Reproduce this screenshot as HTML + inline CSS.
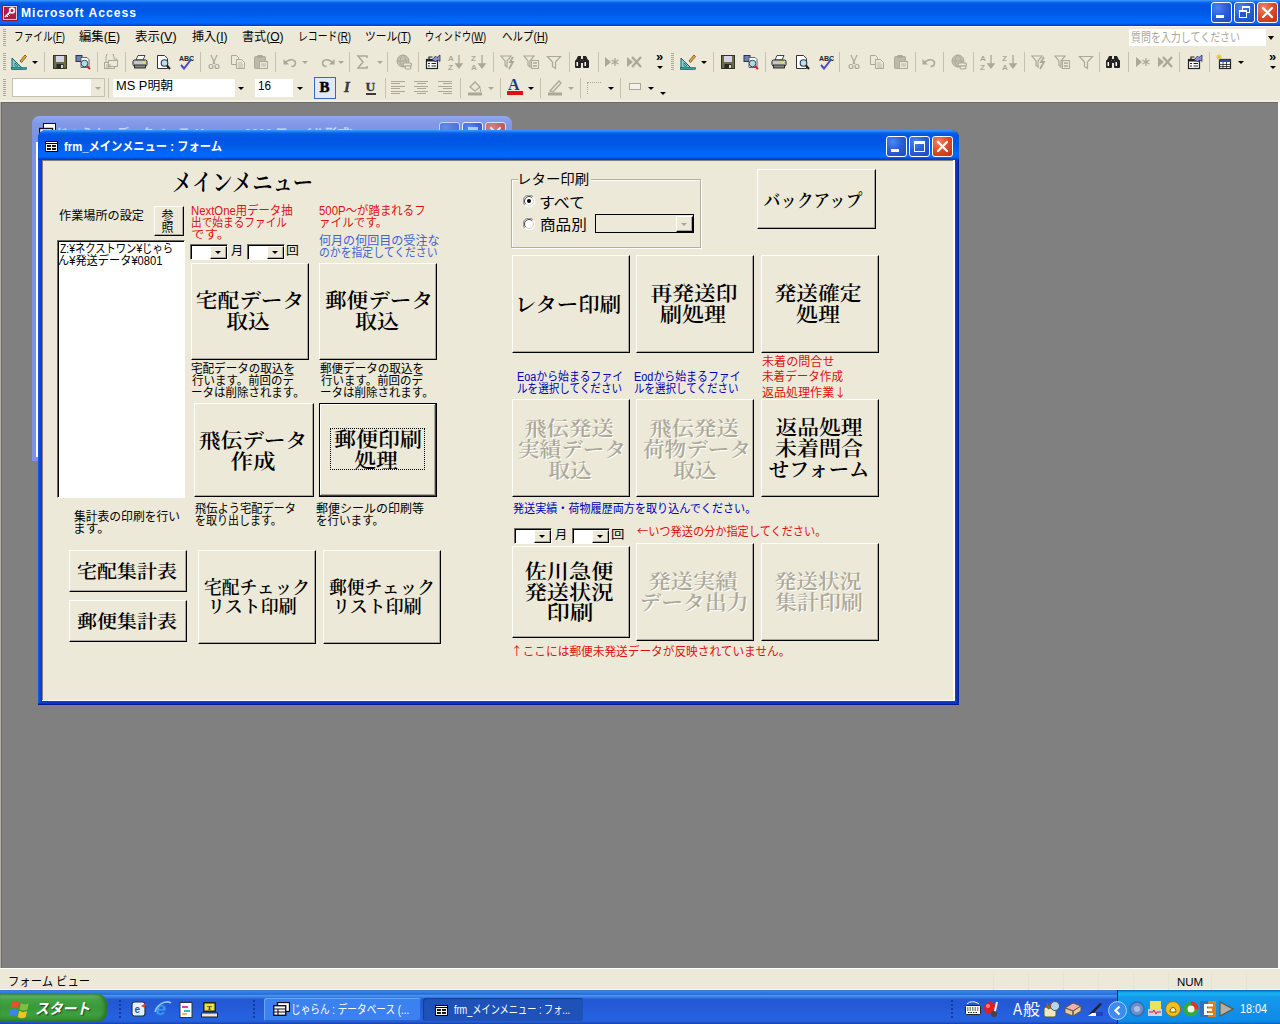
<!DOCTYPE html>
<html lang="ja">
<head>
<meta charset="utf-8">
<title>Microsoft Access</title>
<style>
*{box-sizing:border-box;margin:0;padding:0}
html,body{width:1280px;height:1024px;overflow:hidden;background:#808080}
body{position:relative;font-family:"Liberation Sans","Noto Sans CJK JP","IPAGothic",sans-serif;font-size:12px;color:#000;line-height:12px}
.abs,.abs>*{position:absolute}
#root{position:absolute;left:0;top:0;width:1280px;height:1024px;overflow:hidden}
#root div,#root span,#root svg,#root i,#root b{position:absolute}
.t{white-space:nowrap;transform-origin:0 0;line-height:12px}
.serif{font-family:"Liberation Serif","Noto Serif CJK JP","Noto Serif CJK SC",serif;font-weight:600}
/* ---------- app chrome ---------- */
#apptitle{left:0;top:0;width:1280px;height:26px;background:linear-gradient(180deg,#3a9bff 0,#2a85f8 4%,#0a62ea 10%,#0058e6 16%,#0055e4 35%,#005ce9 55%,#0066f8 75%,#0069fc 88%,#0058e8 93%,#0040c8 97%,#003cc0 100%)}
#menubar{left:0;top:26px;width:1280px;height:23px;background:#ece9d8;border-top:1px solid #fbfaf5}
#tb1{left:0;top:49px;width:1280px;height:26px;background:#ece9d8}
#tb2{left:0;top:75px;width:1280px;height:26px;background:#ece9d8}
#tbline{left:0;top:100px;width:1280px;height:2px;background:#f2f0e5}
#status{left:0;top:968px;width:1280px;height:22px;background:#ece9d8;border-top:1px solid #fff;border-bottom:1px solid #f6f8f4}
#taskbar{left:0;top:990px;width:1280px;height:34px;background:linear-gradient(180deg,#3a6cb8 0,#3c84e4 3%,#3680e2 6%,#2c78de 9%,#2268d0 12%,#4890f4 16%,#4088ee 19%,#3274dc 23%,#2458d4 28%,#245ad8 50%,#2662e0 80%,#2560dc 92%,#2050c4 96%,#1a40a8 100%)}
.m{top:5px;font-size:12px;line-height:14px;white-space:nowrap;transform-origin:0 0}
.cap{color:#fff;font-weight:bold;white-space:nowrap;transform-origin:0 0}
/* ---------- form window ---------- */
#win{left:38px;top:130px;width:921px;height:575px;border-radius:8px 8px 0 0;background:linear-gradient(90deg,#1a5aee 0,#0a44d6 2px,#0c3cc8 4px,#0c3cc8 916px,#1040c0 918px,#001c98 921px);box-shadow:inset 0 -1px 0 #001890,inset 0 -2px 0 #0a34b8}
#wintitle{left:0;top:0;width:921px;height:30px;border-radius:8px 8px 0 0;background:linear-gradient(180deg,#3a9bff 0,#2a85f8 4%,#0a62ea 10%,#0058e6 16%,#0055e4 35%,#005ce9 55%,#0066f8 75%,#0069fc 88%,#0058e8 93%,#0040c8 97%,#003cc0 100%)}
#client{left:5px;top:30px;width:911px;height:540px;background:#ece9d8}
.btn{background:#ece9d8;border-top:1px solid #fff;border-left:1px solid #fff;border-right:1px solid #000;border-bottom:1px solid #000;box-shadow:inset -1px -1px 0 #aca899}
.bt{left:0;width:100%;text-align:center;white-space:nowrap;font-size:21.33px;line-height:21px}
.dis{color:#aca899;text-shadow:1px 1px 0 #fff}
.red{color:#e00000}
.blue{color:#0000c8}
.combo{background:#fff;border-top:1px solid #6d6b62;border-left:1px solid #6d6b62;border-right:1px solid #fff;border-bottom:1px solid #fff;box-shadow:inset 1px 1px 0 #000}
.cbtn{background:#ece9d8;border-top:1px solid #fff;border-left:1px solid #fff;border-right:1px solid #000;border-bottom:1px solid #000;box-shadow:inset -1px -1px 0 #aca899}
.arrow{width:0;height:0;border-left:3px solid transparent;border-right:3px solid transparent;border-top:3px solid #000}
.serifl{font-family:"Liberation Serif",serif}
.sunk{border-top:1px solid #6d6b62;border-left:1px solid #6d6b62;border-right:1px solid #fff;border-bottom:1px solid #fff;box-shadow:inset 1px 1px 0 #000}
.focus{box-shadow:inset -1px -1px 0 #000, inset 1px 1px 0 #000, inset -2px -2px 0 #404040, inset 2px 2px 0 #fff, inset -3px -3px 0 #aca899 !important;border:none !important;background:#ece9d8}
.wb{border:1px solid #fff;border-radius:3px;background:radial-gradient(circle at 30% 25%,#4d86f0 0,#2a5fd8 45%,#1c49c0 100%)}
.wb.close{background:radial-gradient(circle at 30% 25%,#f08468 0,#dc4a26 50%,#c03010 100%)}
.wb.inact{opacity:.55}
.backwin{background:#7b94e4;border-radius:7px 7px 0 0}
.bwtitle{border-radius:8px 8px 0 0;background:linear-gradient(180deg,#92a8f0 0,#8098e6 30%,#7a90e0 100%)}
.startbtn{border-radius:0 10px 10px 0 / 0 14px 14px 0;background:linear-gradient(180deg,#4fa44f 0,#66b866 7%,#46a446 18%,#3a993a 45%,#3e9f3e 75%,#359235 90%,#2b7d2b 100%);box-shadow:inset -3px 0 4px #2a6e2a}
.task{border-radius:3px;background:#3c81f0;box-shadow:inset 1px 1px 0 #6aa4ff, inset -1px -1px 0 #2a5fd0}
.task.active{background:#1e52b8;box-shadow:inset 1px 1px 1px #143c90}
.tray{background:linear-gradient(180deg,#0c59b9 0,#139ee9 6%,#18b5f2 12%,#139beb 20%,#1290e8 60%,#0d8dea 85%,#0d88e0 93%,#095bc9 100%);border-left:1px solid #092e51}
.t .cj{position:static !important;font-family:"Noto Sans CJK JP","IPAGothic",sans-serif}
</style>
</head>
<body>
<div id="root">
<div id="apptitle"></div>
<svg style="left:2px;top:5px" width="16" height="16" viewBox="0 0 16 16"><rect x="0" y="0" width="16" height="16" fill="#8b1538"/><rect x="1.5" y="1.5" width="13" height="13" fill="#a82048" stroke="#e8c8d0" stroke-width="1"/><path d="M3 12L8 7" stroke="#fff" stroke-width="1.6"/><circle cx="10" cy="5.5" r="2.4" fill="none" stroke="#fff" stroke-width="1.6"/><path d="M4.5 10.5l1.5 1.5M6 9l1.5 1.5" stroke="#fff" stroke-width="1"/></svg>
<span id="t1" class="t cap" style="left:20.98px;top:6px;font-size:12px;line-height:15px;transform:scaleX(1.0097);letter-spacing:1px;">Microsoft Access</span>
<div class="wb" style="left:1211px;top:2px;width:21px;height:21px"><i style="left:4px;top:12px;width:8px;height:3px;background:#fff"></i></div>
<div class="wb" style="left:1234px;top:2px;width:21px;height:21px"><i style="left:7px;top:3px;width:8px;height:7px;border:1px solid #fff;border-top-width:2px"></i><i style="left:4px;top:7px;width:8px;height:8px;border:1px solid #fff;border-top-width:2px;background:#2458c8"></i></div>
<div class="wb close" style="left:1257px;top:2px;width:21px;height:21px"><svg style="left:0;top:0" width="19" height="19" viewBox="0 0 19 19"><path d="M5 5L14 14M14 5L5 14" stroke="#fff" stroke-width="2.2" stroke-linecap="round"/></svg></div>
<div id="menubar"></div><div id="tb1"></div><div id="tb2"></div><div id="tbline"></div>
<div class="" style="left:3px;top:29px;width:3px;height:17px;background:repeating-linear-gradient(180deg,#a5a28f 0,#a5a28f 1px,transparent 1px,transparent 2px);opacity:.9"></div>
<div class="" style="left:3px;top:53px;width:3px;height:18px;background:repeating-linear-gradient(180deg,#a5a28f 0,#a5a28f 1px,transparent 1px,transparent 2px);opacity:.9"></div>
<div class="" style="left:3px;top:79px;width:3px;height:18px;background:repeating-linear-gradient(180deg,#a5a28f 0,#a5a28f 1px,transparent 1px,transparent 2px);opacity:.9"></div>
<div class="" style="left:671px;top:53px;width:3px;height:18px;background:repeating-linear-gradient(180deg,#a5a28f 0,#a5a28f 1px,transparent 1px,transparent 2px);opacity:.9"></div>
<span id="t2" class="t " style="left:13.96px;top:30px;font-size:12px;line-height:14px;transform:scaleX(0.8062);">ファイル(<u>F</u>)</span>
<span id="t3" class="t " style="left:79.42px;top:30px;font-size:12px;line-height:14px;transform:scaleX(1.0273);">編集(<u>E</u>)</span>
<span id="t4" class="t " style="left:135.19px;top:30px;font-size:12px;line-height:14px;transform:scaleX(1.0393);">表示(<u>V</u>)</span>
<span id="t5" class="t " style="left:192px;top:30px;font-size:12px;line-height:14px;transform:scaleX(1.0051);">挿入(<u>I</u>)</span>
<span id="t6" class="t " style="left:241.95px;top:30px;font-size:12px;line-height:14px;transform:scaleX(1.0058);">書式(<u>O</u>)</span>
<span id="t7" class="t " style="left:297.88px;top:30px;font-size:12px;line-height:14px;transform:scaleX(0.8217);">レコード(<u>R</u>)</span>
<span id="t8" class="t " style="left:365.43px;top:30px;font-size:12px;line-height:14px;transform:scaleX(0.8978);">ツール(<u>T</u>)</span>
<span id="t9" class="t " style="left:424.98px;top:30px;font-size:12px;line-height:14px;transform:scaleX(0.7692);">ウィンドウ(<u>W</u>)</span>
<span id="t10" class="t " style="left:501.96px;top:30px;font-size:12px;line-height:14px;transform:scaleX(0.8747);">ヘルプ(<u>H</u>)</span>
<div class="" style="left:1129px;top:29px;width:137px;height:17px;background:#fff"></div>
<span id="t11" class="t " style="left:1130.98px;top:31px;font-size:12px;line-height:14px;color:#aca899;transform:scaleX(0.8305);">質問を入力してください</span>
<i class="arrow" style="left:1268px;top:36px;border-left-width:3.5px;border-right-width:3.5px;border-top-width:4px"></i>
<svg style="left:11px;top:54px" width="16" height="16" viewBox="0 0 16 16"><path d="M1 15V4L12 15Z" fill="#7fd0d0" stroke="#106060" stroke-width="1"/><path d="M4 12V9L7 12Z" fill="#ece9d8" stroke="#106060" stroke-width=".8"/><path d="M9 7L14 1L15.5 2.5L10.5 8.5Z" fill="#e8b040" stroke="#704010" stroke-width=".8"/><rect x="0.5" y="13.5" width="15" height="2" fill="#40a0a0" stroke="#106060" stroke-width=".6"/></svg>
<i class="arrow" style="left:32px;top:61px;border-top-color:#000"></i>
<div class="" style="left:44px;top:52px;width:1px;height:20px;background:#c5c2b2"></div>
<svg style="left:52px;top:54px" width="16" height="16" viewBox="0 0 16 16"><rect x="1.5" y="1.5" width="13" height="13" fill="#6b6b4a" stroke="#33331f"/><rect x="4" y="2" width="8" height="6" fill="#d8d4e8"/><rect x="4.5" y="10" width="7" height="4.5" fill="#2a2a20"/><rect x="9" y="11" width="2" height="3" fill="#d8d4e8"/></svg>
<svg style="left:75px;top:54px" width="16" height="16" viewBox="0 0 16 16"><rect x="1" y="1.5" width="6" height="6" fill="#6a7fc0" stroke="#333"/><path d="M6 3.5h6l2 2v8H6z" fill="#fff" stroke="#555" stroke-width=".9"/><circle cx="9.5" cy="9.5" r="3.3" fill="#a8e0e8" stroke="#446" stroke-width="1"/><path d="M12 12l3 3" stroke="#d02030" stroke-width="2"/></svg>
<div class="" style="left:97px;top:52px;width:1px;height:20px;background:#c5c2b2"></div>
<svg style="left:103px;top:54px" width="16" height="16" viewBox="0 0 16 16"><path d="M3 8V3a4 4 0 0 1 8 0V5l3 0v3" fill="none" stroke="#aca899"/><rect x="1.5" y="8.5" width="10" height="6" fill="#ece9d8" stroke="#aca899"/><rect x="5.5" y="6.5" width="9" height="6" fill="#ece9d8" stroke="#aca899"/><path d="M3 11h5M3 13h5" stroke="#aca899"/></svg>
<div class="" style="left:125px;top:52px;width:1px;height:20px;background:#c5c2b2"></div>
<svg style="left:132px;top:54px" width="16" height="16" viewBox="0 0 16 16"><path d="M4 6L6 1.5h7L11 6z" fill="#fff" stroke="#333" stroke-width=".9"/><rect x="1" y="6" width="14" height="6" rx="1.5" fill="#c8c8c0" stroke="#222"/><rect x="2.5" y="11" width="11" height="3" fill="#888" stroke="#222" stroke-width=".9"/><rect x="11" y="8" width="2" height="1" fill="#ee3"/></svg>
<svg style="left:155px;top:54px" width="16" height="16" viewBox="0 0 16 16"><path d="M2.500 1.500h7l3 3v10h-10z" fill="#fff" stroke="#333"/><circle cx="9.500" cy="9" r="3.300" fill="#b8e4ec" stroke="#335" stroke-width="1.100"/><path d="M12 11.500l3 3.500" stroke="#222" stroke-width="2"/></svg>
<svg style="left:178px;top:54px" width="16" height="16" viewBox="0 0 16 16"><text x="1" y="7" font-size="7" font-weight="bold" font-family="Liberation Sans,sans-serif" fill="#223">ABC</text><path d="M3 11l3 3.500L13.500 5" fill="none" stroke="#4a4ac0" stroke-width="2"/></svg>
<div class="" style="left:200px;top:52px;width:1px;height:20px;background:#c5c2b2"></div>
<svg style="left:206px;top:54px" width="16" height="16" viewBox="0 0 16 16"><path d="M5 1l4 9M11 1L7 10" stroke="#aca899" stroke-width="1.200" fill="none"/><circle cx="5" cy="12.500" r="2" fill="none" stroke="#aca899" stroke-width="1.200"/><circle cx="11" cy="12.500" r="2" fill="none" stroke="#aca899" stroke-width="1.200"/></svg>
<svg style="left:230px;top:54px" width="16" height="16" viewBox="0 0 16 16"><path d="M1.500 1.500h5l2 2v7h-7z" fill="#ece9d8" stroke="#aca899"/><path d="M6.500 5.500h5l3 3v6h-8z" fill="#ece9d8" stroke="#aca899"/><path d="M8 9h4M8 11h5M8 13h5" stroke="#aca899" stroke-width=".8"/></svg>
<svg style="left:253px;top:54px" width="16" height="16" viewBox="0 0 16 16"><rect x="1.500" y="2.500" width="11" height="12" rx="1" fill="#bdb9a6" stroke="#aca899"/><rect x="4.500" y="1" width="5" height="3" fill="#aca899"/><rect x="6.500" y="7.500" width="8" height="7" fill="#ece9d8" stroke="#aca899"/><path d="M8 10h5M8 12h5" stroke="#aca899" stroke-width=".8"/></svg>
<div class="" style="left:275px;top:52px;width:1px;height:20px;background:#c5c2b2"></div>
<svg style="left:282px;top:54px" width="16" height="16" viewBox="0 0 16 16"><path d="M1.500 5v5.500H7z" fill="#aca899"/><path d="M3 9.500C5 5.500 11 4.500 13 7.500c1.500 2.500-.5 5-3.500 5" fill="none" stroke="#aca899" stroke-width="1.700"/></svg>
<i class="arrow" style="left:302px;top:61px;border-top-color:#aca899"></i>
<svg style="left:320px;top:54px" width="16" height="16" viewBox="0 0 16 16"><path d="M14.500 5v5.500H9z" fill="#aca899"/><path d="M13 9.500C11 5.500 5 4.500 3 7.500c-1.500 2.500.5 5 3.500 5" fill="none" stroke="#aca899" stroke-width="1.700"/></svg>
<i class="arrow" style="left:338px;top:61px;border-top-color:#aca899"></i>
<div class="" style="left:349px;top:52px;width:1px;height:20px;background:#c5c2b2"></div>
<svg style="left:355px;top:54px" width="16" height="16" viewBox="0 0 16 16"><path d="M12 4V2H3l5 6-5 6h9v-2" fill="none" stroke="#aca899" stroke-width="1.500"/></svg>
<i class="arrow" style="left:377px;top:61px;border-top-color:#aca899"></i>
<div class="" style="left:387px;top:52px;width:1px;height:20px;background:#c5c2b2"></div>
<svg style="left:396px;top:54px" width="16" height="16" viewBox="0 0 16 16"><circle cx="7" cy="7" r="6" fill="#c4c0ae" stroke="#aca899"/><path d="M1 7h12M7 1c-4 3-4 9 0 12M7 1c4 3 4 9 0 12" fill="none" stroke="#aca899" stroke-width=".9"/><rect x="7" y="9" width="8.500" height="3" rx="1.500" fill="#ece9d8" stroke="#aca899" stroke-width="1.200"/><rect x="9" y="12" width="6" height="3" rx="1.500" fill="#ece9d8" stroke="#aca899" stroke-width="1.200"/></svg>
<div class="" style="left:418px;top:52px;width:1px;height:20px;background:#c5c2b2"></div>
<svg style="left:425px;top:54px" width="16" height="16" viewBox="0 0 16 16"><rect x="1.500" y="5.500" width="11" height="9" fill="#fff" stroke="#222" stroke-width="1.200"/><rect x="1.500" y="5.500" width="11" height="2" fill="#222"/><path d="M3 9.500h2M6.500 9.500h4.500M3 12h2M6.500 12h4.500" stroke="#222" stroke-width="1.200"/><path d="M7 6l3.500-4 1.500 1.500L15 1v6.500l-2-1.500-2.500 1.500z" fill="#8890d8" stroke="#223" stroke-width=".7"/><path d="M4 5.500V3h3.500" fill="none" stroke="#222" stroke-width="1.200"/></svg>
<svg style="left:448px;top:54px" width="16" height="16" viewBox="0 0 16 16"><text x="0" y="7" font-size="8" font-weight="bold" font-family="Liberation Sans,sans-serif" fill="#aca899">A</text><text x="0" y="15.500" font-size="8" font-weight="bold" font-family="Liberation Sans,sans-serif" fill="#aca899">Z</text><path d="M11 1v12M8 10l3 4 3-4z" stroke="#aca899" stroke-width="1.300" fill="#aca899"/></svg>
<svg style="left:471px;top:54px" width="16" height="16" viewBox="0 0 16 16"><text x="0" y="7" font-size="8" font-weight="bold" font-family="Liberation Sans,sans-serif" fill="#aca899">Z</text><text x="0" y="15.500" font-size="8" font-weight="bold" font-family="Liberation Sans,sans-serif" fill="#aca899">A</text><path d="M11 1v12M8 10l3 4 3-4z" stroke="#aca899" stroke-width="1.300" fill="#aca899"/></svg>
<div class="" style="left:493px;top:52px;width:1px;height:20px;background:#c5c2b2"></div>
<svg style="left:500px;top:54px" width="16" height="16" viewBox="0 0 16 16"><path d="M1 2h10L7 7v6l-2-1.500V7z" fill="#ece9d8" stroke="#aca899" stroke-width="1.200"/><path d="M13 3l-3 5h3l-4 7" fill="none" stroke="#aca899" stroke-width="1.800"/></svg>
<svg style="left:523px;top:54px" width="16" height="16" viewBox="0 0 16 16"><path d="M1 2h10L7 7v6l-2-1.500V7z" fill="#ece9d8" stroke="#aca899" stroke-width="1.200"/><rect x="8.500" y="6.500" width="7" height="8" fill="#ece9d8" stroke="#aca899"/><path d="M10 9h4M10 12h4" stroke="#aca899" stroke-width="1.500"/></svg>
<svg style="left:546px;top:54px" width="16" height="16" viewBox="0 0 16 16"><path d="M1.500 2.500h13L9.500 8v6.500l-3-2V8z" fill="#ece9d8" stroke="#aca899" stroke-width="1.200"/></svg>
<div class="" style="left:569px;top:52px;width:1px;height:20px;background:#c5c2b2"></div>
<svg style="left:574px;top:54px" width="16" height="16" viewBox="0 0 16 16"><path d="M2 6l2-4h3v4zM14 6l-2-4H9v4z" fill="#222"/><rect x="1" y="6" width="6" height="8" rx="1" fill="#222"/><rect x="9" y="6" width="6" height="8" rx="1" fill="#222"/><rect x="7" y="5" width="2" height="4" fill="#222"/><rect x="2.500" y="8" width="1.500" height="4" fill="#fff"/><rect x="10.500" y="8" width="1.500" height="4" fill="#fff"/></svg>
<div class="" style="left:598px;top:52px;width:1px;height:20px;background:#c5c2b2"></div>
<svg style="left:604px;top:54px" width="16" height="16" viewBox="0 0 16 16"><path d="M1 3v10l6-5z" fill="#aca899"/><path d="M11 4v8M7.500 6l7 4M7.500 10l7-4" stroke="#aca899" stroke-width="1.300"/></svg>
<svg style="left:626px;top:54px" width="16" height="16" viewBox="0 0 16 16"><path d="M1 3v10l6-5z" fill="#aca899"/><path d="M6 3l9 10M15 3L6 13" stroke="#aca899" stroke-width="2.200"/></svg>
<span id="t12" class="t " style="left:656px;top:50px;font-size:13px;line-height:13px;font-weight:bold;line-height:13px">»</span>
<i class="arrow" style="left:657px;top:66px;border-top-color:#000"></i>
<svg style="left:680px;top:54px" width="16" height="16" viewBox="0 0 16 16"><path d="M1 15V4L12 15Z" fill="#7fd0d0" stroke="#106060" stroke-width="1"/><path d="M4 12V9L7 12Z" fill="#ece9d8" stroke="#106060" stroke-width=".8"/><path d="M9 7L14 1L15.5 2.5L10.5 8.5Z" fill="#e8b040" stroke="#704010" stroke-width=".8"/><rect x="0.5" y="13.5" width="15" height="2" fill="#40a0a0" stroke="#106060" stroke-width=".6"/></svg>
<i class="arrow" style="left:701px;top:61px;border-top-color:#000"></i>
<div class="" style="left:713px;top:52px;width:1px;height:20px;background:#c5c2b2"></div>
<svg style="left:720px;top:54px" width="16" height="16" viewBox="0 0 16 16"><rect x="1.5" y="1.5" width="13" height="13" fill="#6b6b4a" stroke="#33331f"/><rect x="4" y="2" width="8" height="6" fill="#d8d4e8"/><rect x="4.5" y="10" width="7" height="4.5" fill="#2a2a20"/><rect x="9" y="11" width="2" height="3" fill="#d8d4e8"/></svg>
<svg style="left:743px;top:54px" width="16" height="16" viewBox="0 0 16 16"><rect x="1" y="1.5" width="6" height="6" fill="#6a7fc0" stroke="#333"/><path d="M6 3.5h6l2 2v8H6z" fill="#fff" stroke="#555" stroke-width=".9"/><circle cx="9.5" cy="9.5" r="3.3" fill="#a8e0e8" stroke="#446" stroke-width="1"/><path d="M12 12l3 3" stroke="#d02030" stroke-width="2"/></svg>
<div class="" style="left:765px;top:52px;width:1px;height:20px;background:#c5c2b2"></div>
<svg style="left:771px;top:54px" width="16" height="16" viewBox="0 0 16 16"><path d="M4 6L6 1.5h7L11 6z" fill="#fff" stroke="#333" stroke-width=".9"/><rect x="1" y="6" width="14" height="6" rx="1.5" fill="#c8c8c0" stroke="#222"/><rect x="2.5" y="11" width="11" height="3" fill="#888" stroke="#222" stroke-width=".9"/><rect x="11" y="8" width="2" height="1" fill="#ee3"/></svg>
<svg style="left:794px;top:54px" width="16" height="16" viewBox="0 0 16 16"><path d="M2.500 1.500h7l3 3v10h-10z" fill="#fff" stroke="#333"/><circle cx="9.500" cy="9" r="3.300" fill="#b8e4ec" stroke="#335" stroke-width="1.100"/><path d="M12 11.500l3 3.500" stroke="#222" stroke-width="2"/></svg>
<svg style="left:818px;top:54px" width="16" height="16" viewBox="0 0 16 16"><text x="1" y="7" font-size="7" font-weight="bold" font-family="Liberation Sans,sans-serif" fill="#223">ABC</text><path d="M3 11l3 3.500L13.500 5" fill="none" stroke="#4a4ac0" stroke-width="2"/></svg>
<div class="" style="left:839px;top:52px;width:1px;height:20px;background:#c5c2b2"></div>
<svg style="left:846px;top:54px" width="16" height="16" viewBox="0 0 16 16"><path d="M5 1l4 9M11 1L7 10" stroke="#aca899" stroke-width="1.200" fill="none"/><circle cx="5" cy="12.500" r="2" fill="none" stroke="#aca899" stroke-width="1.200"/><circle cx="11" cy="12.500" r="2" fill="none" stroke="#aca899" stroke-width="1.200"/></svg>
<svg style="left:869px;top:54px" width="16" height="16" viewBox="0 0 16 16"><path d="M1.500 1.500h5l2 2v7h-7z" fill="#ece9d8" stroke="#aca899"/><path d="M6.500 5.500h5l3 3v6h-8z" fill="#ece9d8" stroke="#aca899"/><path d="M8 9h4M8 11h5M8 13h5" stroke="#aca899" stroke-width=".8"/></svg>
<svg style="left:893px;top:54px" width="16" height="16" viewBox="0 0 16 16"><rect x="1.500" y="2.500" width="11" height="12" rx="1" fill="#bdb9a6" stroke="#aca899"/><rect x="4.500" y="1" width="5" height="3" fill="#aca899"/><rect x="6.500" y="7.500" width="8" height="7" fill="#ece9d8" stroke="#aca899"/><path d="M8 10h5M8 12h5" stroke="#aca899" stroke-width=".8"/></svg>
<div class="" style="left:915px;top:52px;width:1px;height:20px;background:#c5c2b2"></div>
<svg style="left:921px;top:54px" width="16" height="16" viewBox="0 0 16 16"><path d="M1.500 5v5.500H7z" fill="#aca899"/><path d="M3 9.500C5 5.500 11 4.500 13 7.500c1.500 2.500-.5 5-3.500 5" fill="none" stroke="#aca899" stroke-width="1.700"/></svg>
<div class="" style="left:943px;top:52px;width:1px;height:20px;background:#c5c2b2"></div>
<svg style="left:951px;top:54px" width="16" height="16" viewBox="0 0 16 16"><circle cx="7" cy="7" r="6" fill="#c4c0ae" stroke="#aca899"/><path d="M1 7h12M7 1c-4 3-4 9 0 12M7 1c4 3 4 9 0 12" fill="none" stroke="#aca899" stroke-width=".9"/><rect x="7" y="9" width="8.500" height="3" rx="1.500" fill="#ece9d8" stroke="#aca899" stroke-width="1.200"/><rect x="9" y="12" width="6" height="3" rx="1.500" fill="#ece9d8" stroke="#aca899" stroke-width="1.200"/></svg>
<div class="" style="left:973px;top:52px;width:1px;height:20px;background:#c5c2b2"></div>
<svg style="left:980px;top:54px" width="16" height="16" viewBox="0 0 16 16"><text x="0" y="7" font-size="8" font-weight="bold" font-family="Liberation Sans,sans-serif" fill="#aca899">A</text><text x="0" y="15.500" font-size="8" font-weight="bold" font-family="Liberation Sans,sans-serif" fill="#aca899">Z</text><path d="M11 1v12M8 10l3 4 3-4z" stroke="#aca899" stroke-width="1.300" fill="#aca899"/></svg>
<svg style="left:1002px;top:54px" width="16" height="16" viewBox="0 0 16 16"><text x="0" y="7" font-size="8" font-weight="bold" font-family="Liberation Sans,sans-serif" fill="#aca899">Z</text><text x="0" y="15.500" font-size="8" font-weight="bold" font-family="Liberation Sans,sans-serif" fill="#aca899">A</text><path d="M11 1v12M8 10l3 4 3-4z" stroke="#aca899" stroke-width="1.300" fill="#aca899"/></svg>
<div class="" style="left:1024px;top:52px;width:1px;height:20px;background:#c5c2b2"></div>
<svg style="left:1031px;top:54px" width="16" height="16" viewBox="0 0 16 16"><path d="M1 2h10L7 7v6l-2-1.500V7z" fill="#ece9d8" stroke="#aca899" stroke-width="1.200"/><path d="M13 3l-3 5h3l-4 7" fill="none" stroke="#aca899" stroke-width="1.800"/></svg>
<svg style="left:1054px;top:54px" width="16" height="16" viewBox="0 0 16 16"><path d="M1 2h10L7 7v6l-2-1.500V7z" fill="#ece9d8" stroke="#aca899" stroke-width="1.200"/><rect x="8.500" y="6.500" width="7" height="8" fill="#ece9d8" stroke="#aca899"/><path d="M10 9h4M10 12h4" stroke="#aca899" stroke-width="1.500"/></svg>
<svg style="left:1078px;top:54px" width="16" height="16" viewBox="0 0 16 16"><path d="M1.500 2.500h13L9.500 8v6.500l-3-2V8z" fill="#ece9d8" stroke="#aca899" stroke-width="1.200"/></svg>
<div class="" style="left:1099px;top:52px;width:1px;height:20px;background:#c5c2b2"></div>
<svg style="left:1105px;top:54px" width="16" height="16" viewBox="0 0 16 16"><path d="M2 6l2-4h3v4zM14 6l-2-4H9v4z" fill="#222"/><rect x="1" y="6" width="6" height="8" rx="1" fill="#222"/><rect x="9" y="6" width="6" height="8" rx="1" fill="#222"/><rect x="7" y="5" width="2" height="4" fill="#222"/><rect x="2.500" y="8" width="1.500" height="4" fill="#fff"/><rect x="10.500" y="8" width="1.500" height="4" fill="#fff"/></svg>
<div class="" style="left:1128px;top:52px;width:1px;height:20px;background:#c5c2b2"></div>
<svg style="left:1135px;top:54px" width="16" height="16" viewBox="0 0 16 16"><path d="M1 3v10l6-5z" fill="#aca899"/><path d="M11 4v8M7.500 6l7 4M7.500 10l7-4" stroke="#aca899" stroke-width="1.300"/></svg>
<svg style="left:1157px;top:54px" width="16" height="16" viewBox="0 0 16 16"><path d="M1 3v10l6-5z" fill="#aca899"/><path d="M6 3l9 10M15 3L6 13" stroke="#aca899" stroke-width="2.200"/></svg>
<div class="" style="left:1179px;top:52px;width:1px;height:20px;background:#c5c2b2"></div>
<svg style="left:1187px;top:54px" width="16" height="16" viewBox="0 0 16 16"><rect x="1.500" y="5.500" width="11" height="9" fill="#fff" stroke="#222" stroke-width="1.200"/><rect x="1.500" y="5.500" width="11" height="2" fill="#222"/><path d="M3 9.500h2M6.500 9.500h4.500M3 12h2M6.500 12h4.500" stroke="#222" stroke-width="1.200"/><path d="M7 6l3.500-4 1.500 1.500L15 1v6.500l-2-1.500-2.500 1.500z" fill="#8890d8" stroke="#223" stroke-width=".7"/><path d="M4 5.500V3h3.500" fill="none" stroke="#222" stroke-width="1.200"/></svg>
<div class="" style="left:1209px;top:52px;width:1px;height:20px;background:#c5c2b2"></div>
<svg style="left:1216px;top:54px" width="16" height="16" viewBox="0 0 16 16"><rect x="3.500" y="5.500" width="11" height="9" fill="#fff" stroke="#222" stroke-width="1.200"/><rect x="3.500" y="5.500" width="11" height="2.500" fill="#334a9a"/><path d="M3.500 10.500h11M3.500 12.500h11M7 8v6.500M10.500 8v6.500" stroke="#222" stroke-width=".8"/><path d="M3 0v6M0 3h6M1 1l4 4M5 1L1 5" stroke="#e0c020" stroke-width=".9"/></svg>
<i class="arrow" style="left:1238px;top:61px;border-top-color:#000"></i>
<span id="t13" class="t " style="left:1269px;top:50px;font-size:13px;line-height:13px;font-weight:bold;line-height:13px">»</span>
<i class="arrow" style="left:1270px;top:66px;border-top-color:#000"></i>
<div class="" style="left:12px;top:78px;width:93px;height:19px;background:#fff;border:1px solid #c5c2b2"></div>
<div class="" style="left:91px;top:79px;width:13px;height:17px;background:#ece9d8"></div>
<i class="arrow" style="left:95px;top:87px;border-top-color:#aca899"></i>
<div class="" style="left:108px;top:78px;width:1px;height:20px;background:#c5c2b2"></div>
<div class="" style="left:113px;top:79px;width:136px;height:18px;background:#fff"></div>
<div class="" style="left:235px;top:79px;width:14px;height:18px;background:#ece9d8"></div>
<i class="arrow" style="left:238px;top:87px;border-top-color:#000"></i>
<span id="t14" class="t " style="left:115.96px;top:79px;font-size:12px;line-height:14px;transform:scaleX(1.0699);">MS P明朝</span>
<div class="" style="left:255px;top:79px;width:52px;height:18px;background:#fff"></div>
<div class="" style="left:293px;top:79px;width:14px;height:18px;background:#ece9d8"></div>
<i class="arrow" style="left:297px;top:87px;border-top-color:#000"></i>
<span id="t15" class="t " style="left:257.91px;top:79px;font-size:12px;line-height:14px;transform:scaleX(0.9799);">16</span>
<div class="" style="left:314px;top:77px;width:22px;height:22px;background:#e3e8f4;border:1px solid #316ac5"></div>
<span id="t16" class="t serifl" style="left:319.5px;top:78px;font-size:15px;line-height:15px;font-weight:bold;line-height:18px;-webkit-text-stroke:.5px #000">B</span>
<span id="t17" class="t serifl" style="left:344px;top:78px;font-size:15px;line-height:15px;font-weight:bold;font-style:italic;line-height:18px;color:#3a3a36;-webkit-text-stroke:.4px #3a3a36">I</span>
<span id="t18" class="t serifl" style="left:365.5px;top:79px;font-size:13.5px;line-height:13.5px;font-weight:bold;line-height:16px;color:#3a3a36;-webkit-text-stroke:.3px #3a3a36">U</span>
<div class="" style="left:366px;top:93px;width:10px;height:1.5px;background:#3a3a36"></div>
<div class="" style="left:385px;top:78px;width:1px;height:20px;background:#c5c2b2"></div>
<div class="" style="left:391px;top:81px;width:14px;height:1px;background:#aca899"></div>
<div class="" style="left:391px;top:83.4px;width:9px;height:1px;background:#aca899"></div>
<div class="" style="left:391px;top:85.8px;width:14px;height:1px;background:#aca899"></div>
<div class="" style="left:391px;top:88.2px;width:9px;height:1px;background:#aca899"></div>
<div class="" style="left:391px;top:90.6px;width:14px;height:1px;background:#aca899"></div>
<div class="" style="left:391px;top:93px;width:9px;height:1px;background:#aca899"></div>
<div class="" style="left:414px;top:81px;width:14px;height:1px;background:#aca899"></div>
<div class="" style="left:416.5px;top:83.4px;width:9px;height:1px;background:#aca899"></div>
<div class="" style="left:414px;top:85.8px;width:14px;height:1px;background:#aca899"></div>
<div class="" style="left:416.5px;top:88.2px;width:9px;height:1px;background:#aca899"></div>
<div class="" style="left:414px;top:90.6px;width:14px;height:1px;background:#aca899"></div>
<div class="" style="left:416.5px;top:93px;width:9px;height:1px;background:#aca899"></div>
<div class="" style="left:438px;top:81px;width:14px;height:1px;background:#aca899"></div>
<div class="" style="left:443px;top:83.4px;width:9px;height:1px;background:#aca899"></div>
<div class="" style="left:438px;top:85.8px;width:14px;height:1px;background:#aca899"></div>
<div class="" style="left:443px;top:88.2px;width:9px;height:1px;background:#aca899"></div>
<div class="" style="left:438px;top:90.6px;width:14px;height:1px;background:#aca899"></div>
<div class="" style="left:443px;top:93px;width:9px;height:1px;background:#aca899"></div>
<div class="" style="left:460px;top:78px;width:1px;height:20px;background:#c5c2b2"></div>
<svg style="left:467px;top:80px" width="16" height="16" viewBox="0 0 16 16"><path d="M3 7l5-5 5 5-5 4z" fill="#ece9d8" stroke="#aca899" stroke-width="1.300"/><path d="M12 7c2 2 2 4 1 5" stroke="#aca899" fill="none"/><rect x="1" y="12.500" width="14" height="3" fill="#aca899"/></svg><i class="arrow" style="left:488px;top:87px;border-top-color:#aca899"></i>
<div class="" style="left:500px;top:78px;width:1px;height:20px;background:#c5c2b2"></div>
<span id="t19" class="t serifl" style="left:508px;top:76px;font-size:16px;line-height:16px;font-weight:bold;line-height:17px;color:#223a8a">A</span>
<div class="" style="left:507px;top:91px;width:16px;height:4px;background:#e01010"></div>
<i class="arrow" style="left:528px;top:87px;border-top-color:#000"></i>
<div class="" style="left:540px;top:78px;width:1px;height:20px;background:#c5c2b2"></div>
<svg style="left:547px;top:80px" width="16" height="16" viewBox="0 0 16 16"><path d="M3 11L12 1l2 2L6 12z" fill="#ece9d8" stroke="#aca899" stroke-width="1.300"/><rect x="1" y="12.500" width="14" height="3" fill="#aca899"/></svg><i class="arrow" style="left:568px;top:87px;border-top-color:#aca899"></i>
<div class="" style="left:580px;top:78px;width:1px;height:20px;background:#c5c2b2"></div>
<div class="" style="left:587px;top:82px;width:14px;height:12px;border-top:1px dotted #aca899;border-left:1px dotted #aca899"></div>
<i class="arrow" style="left:608px;top:87px;border-top-color:#000"></i>
<div class="" style="left:620px;top:78px;width:1px;height:20px;background:#c5c2b2"></div>
<div class="" style="left:629px;top:83px;width:12px;height:7px;border:1px solid #aca899;background:#f4f2e8"></div>
<i class="arrow" style="left:648px;top:87px;border-top-color:#000"></i>
<i class="arrow" style="left:660px;top:92px;border-top-color:#000"></i>

<div class="backwin" style="left:32px;top:116px;width:480px;height:345px;overflow:hidden"><div class="bwtitle" style="left:0;top:0;width:480px;height:26px"></div><div style="left:4px;top:26px;width:472px;height:315px;background:#fff"></div><div class="wb inact" style="left:407px;top:6px;width:21px;height:21px"></div><div class="wb inact" style="left:430px;top:6px;width:21px;height:21px"></div><div class="wb inact" style="left:430px;top:6px;width:21px;height:21px"><i style="left:5px;top:4px;width:10px;height:9px;border:1px solid #fff;border-top-width:3px"></i></div><div class="wb close inact" style="left:453px;top:6px;width:21px;height:21px;opacity:.7"><svg style="left:0;top:0" width="19" height="19" viewBox="0 0 19 19"><path d="M5 5L14 14M14 5L5 14" stroke="#fff" stroke-width="2.200" stroke-linecap="round"/></svg></div><svg style="left:7px;top:7px" width="17" height="17" viewBox="0 0 17 17"><rect x="4.500" y="0.500" width="12" height="10" fill="#fff" stroke="#112"/><rect x="0.500" y="5.500" width="13" height="11" fill="#fff" stroke="#112" stroke-width="1.400"/></svg></div>
<span id="t20" class="t cap" style="left:55.99px;top:127px;font-size:12px;line-height:14px;color:#c4d0f4;transform:scaleX(1.0319);">じゃらん : データベース (Access 2000 ファイル形式)</span>

<div id="win" style="left:38px;top:130px;width:921px;height:575px"></div>
<div id="wintitle" style="left:38px;top:130px;width:921px;height:30px"></div>
<div class="" style="left:42px;top:160px;width:913px;height:541px;background:#fff"></div>
<div class="" style="left:42px;top:160px;width:911px;height:540px;background:#848278"></div>
<div class="" style="left:43px;top:161px;width:910px;height:539px;background:#ece9d8"></div>
<svg style="left:45px;top:141px" width="13" height="11" viewBox="0 0 13 11"><rect x="0.5" y="0.5" width="12" height="10" fill="#fff" stroke="#000"/><path d="M1 2.500h11" stroke="#000"/><rect x="2.500" y="4.500" width="3" height="1" fill="#fff" stroke="#000" stroke-width=".9"/><rect x="7.500" y="4.500" width="3" height="1" fill="#fff" stroke="#000" stroke-width=".9"/><rect x="2.500" y="7.500" width="3" height="1" fill="#fff" stroke="#000" stroke-width=".9"/><rect x="7.500" y="7.500" width="3" height="1" fill="#fff" stroke="#000" stroke-width=".9"/></svg>
<span id="t21" class="t cap" style="left:64px;top:140px;font-size:12.5px;line-height:14px;transform:scaleX(0.9032);">frm_メインメニュー : フォーム</span>
<div class="wb" style="left:886px;top:136px;width:21px;height:21px"><i style="left:4px;top:12px;width:8px;height:3px;background:#fff"></i></div>
<div class="wb" style="left:909px;top:136px;width:21px;height:21px"><i style="left:4px;top:4px;width:11px;height:11px;border:1px solid #fff;border-top-width:3px"></i></div>
<div class="wb close" style="left:932px;top:136px;width:21px;height:21px"><svg style="left:0;top:0" width="19" height="19" viewBox="0 0 19 19"><path d="M5 5L14 14M14 5L5 14" stroke="#fff" stroke-width="2.200" stroke-linecap="round"/></svg></div>
<span id="t22" class="t serif" style="left:171.94px;top:169px;font-size:24px;line-height:28px;transform:scaleX(0.8460);">メインメニュー</span>
<span id="t23" class="t " style="left:58.98px;top:210px;font-size:12px;line-height:12px;transform:scaleX(1.0121);">作業場所の設定</span>
<div class="btn" style="left:154px;top:206px;width:30px;height:30px;"></div>
<span id="t24" class="t " style="left:167.5px;top:210px;font-size:12px;line-height:12px;transform:translateX(-50%) scaleX(1.0000);transform-origin:50% 0;">参</span>
<span id="t25" class="t " style="left:167.5px;top:222px;font-size:12px;line-height:12px;transform:translateX(-50%) scaleX(1.0000);transform-origin:50% 0;">照</span>
<div class="sunk" style="left:57px;top:240px;width:128px;height:258px;background:#fff"></div>
<span id="t26" class="t " style="left:59.5px;top:243px;font-size:12px;line-height:12px;transform:scaleX(0.8585);">Z:¥ネクストワン¥じゃら</span>
<span id="t27" class="t " style="left:58.48px;top:255px;font-size:12px;line-height:12px;transform:scaleX(0.9328);">ん¥発送データ¥0801</span>
<span id="t28" class="t " style="left:191.47px;top:205px;font-size:12px;line-height:12px;color:#dd1111;transform:scaleX(0.9458);">NextOne用データ抽</span>
<span id="t29" class="t " style="left:191.47px;top:217px;font-size:12px;line-height:12px;color:#dd1111;transform:scaleX(0.8891);">出で始まるファイル</span>
<span id="t30" class="t " style="left:190.9px;top:229px;font-size:12px;line-height:12px;color:#dd1111;transform:scaleX(1.1260);">です。</span>
<span id="t31" class="t " style="left:319.45px;top:205px;font-size:12px;line-height:12px;color:#dd1111;transform:scaleX(0.9513);">500P～が踏まれるフ</span>
<span id="t32" class="t " style="left:318.68px;top:217px;font-size:12px;line-height:12px;color:#dd1111;transform:scaleX(0.9668);">ァイルです。</span>
<span id="t33" class="t " style="left:319.48px;top:235px;font-size:12px;line-height:12px;color:#3f62d2;transform:scaleX(1.0043);">何月の何回目の受注な</span>
<span id="t34" class="t " style="left:319.48px;top:247px;font-size:12px;line-height:12px;color:#3f62d2;transform:scaleX(0.9029);">のかを指定してください</span>
<div class="combo" style="left:190px;top:244px;width:38px;height:16px;"></div>
<div class="cbtn" style="left:210px;top:246px;width:17px;height:13px;"><i class="arrow" style="left:4px;top:4px"></i></div>
<span id="t35" class="t " style="left:230.82px;top:245px;font-size:12px;line-height:12px;transform:scaleX(1.0112);">月</span>
<div class="combo" style="left:247px;top:244px;width:38px;height:16px;"></div>
<div class="cbtn" style="left:267px;top:246px;width:17px;height:13px;"><i class="arrow" style="left:4px;top:4px"></i></div>
<span id="t36" class="t " style="left:285.77px;top:245px;font-size:12px;line-height:12px;transform:scaleX(1.0706);">回</span>
<div class="btn" style="left:191px;top:263px;width:118px;height:97px;"></div>
<span id="t37" class="t serif" style="left:249.75px;top:291px;font-size:20.5px;line-height:21.33px;transform:translateX(-50%) scaleX(1.0603);transform-origin:50% 0;">宅配データ</span>
<span id="t38" class="t serif" style="left:248.25px;top:312px;font-size:20.5px;line-height:21.33px;transform:translateX(-50%) scaleX(1.0639);transform-origin:50% 0;">取込</span>
<div class="btn" style="left:319px;top:263px;width:118px;height:97px;"></div>
<span id="t39" class="t serif" style="left:379px;top:291px;font-size:20.5px;line-height:21.33px;transform:translateX(-50%) scaleX(1.0552);transform-origin:50% 0;">郵便データ</span>
<span id="t40" class="t serif" style="left:377px;top:312px;font-size:20.5px;line-height:21.33px;transform:translateX(-50%) scaleX(1.0756);transform-origin:50% 0;">取込</span>
<span id="t41" class="t " style="left:190.98px;top:363px;font-size:12px;line-height:12px;transform:scaleX(0.9632);">宅配データの取込を</span>
<span id="t42" class="t " style="left:192px;top:375px;font-size:12px;line-height:12px;transform:scaleX(0.9551);">行います。前回のデ</span>
<span id="t43" class="t " style="left:190.92px;top:387px;font-size:12px;line-height:12px;transform:scaleX(0.9566);">ータは削除されます。</span>
<span id="t44" class="t " style="left:319.98px;top:363px;font-size:12px;line-height:12px;transform:scaleX(0.9632);">郵便データの取込を</span>
<span id="t45" class="t " style="left:321px;top:375px;font-size:12px;line-height:12px;transform:scaleX(0.9551);">行います。前回のデ</span>
<span id="t46" class="t " style="left:319.92px;top:387px;font-size:12px;line-height:12px;transform:scaleX(0.9566);">ータは削除されます。</span>
<div class="btn" style="left:194px;top:403px;width:120px;height:94px;"></div>
<span id="t47" class="t serif" style="left:253.25px;top:431px;font-size:20.5px;line-height:21.33px;transform:translateX(-50%) scaleX(1.0603);transform-origin:50% 0;">飛伝データ</span>
<span id="t48" class="t serif" style="left:252.5px;top:452px;font-size:20.5px;line-height:21.33px;transform:translateX(-50%) scaleX(1.1000);transform-origin:50% 0;">作成</span>
<div class="btn focus" style="left:319px;top:403px;width:118px;height:94px;"></div>
<span id="t49" class="t serif" style="left:377.5px;top:430px;font-size:20.5px;line-height:21.33px;transform:translateX(-50%) scaleX(1.0745);transform-origin:50% 0;">郵便印刷</span>
<span id="t50" class="t serif" style="left:375.75px;top:451px;font-size:20.5px;line-height:21.33px;transform:translateX(-50%) scaleX(1.0630);transform-origin:50% 0;">処理</span>
<div class="" style="left:330px;top:428px;width:95px;height:42px;border:1px dotted #000"></div>
<span id="t51" class="t " style="left:194.97px;top:503px;font-size:12px;line-height:12px;transform:scaleX(0.9360);">飛伝よう宅配データ</span>
<span id="t52" class="t " style="left:194.9px;top:515px;font-size:12px;line-height:12px;transform:scaleX(0.9155);">を取り出します。</span>
<span id="t53" class="t " style="left:315.98px;top:503px;font-size:12px;line-height:12px;transform:scaleX(1.0002);">郵便シールの印刷等</span>
<span id="t54" class="t " style="left:315.87px;top:515px;font-size:12px;line-height:12px;transform:scaleX(0.9617);">を行います。</span>
<span id="t55" class="t " style="left:73.98px;top:511px;font-size:12px;line-height:12px;transform:scaleX(0.9817);">集計表の印刷を行い</span>
<span id="t56" class="t " style="left:73.23px;top:523px;font-size:12px;line-height:12px;transform:scaleX(1.0628);">ます。</span>
<div class="btn" style="left:69px;top:550px;width:118px;height:42px;"></div>
<span id="t57" class="t serif" style="left:127px;top:563px;font-size:18px;line-height:18.67px;transform:translateX(-50%) scaleX(1.1116);transform-origin:50% 0;">宅配集計表</span>
<div class="btn" style="left:69px;top:600px;width:118px;height:42px;"></div>
<span id="t58" class="t serif" style="left:127px;top:613px;font-size:18px;line-height:18.67px;transform:translateX(-50%) scaleX(1.1116);transform-origin:50% 0;">郵便集計表</span>
<div class="btn" style="left:198px;top:550px;width:118px;height:94px;"></div>
<span id="t59" class="t serif" style="left:257px;top:579px;font-size:18px;line-height:18.67px;transform:translateX(-50%) scaleX(0.9878);transform-origin:50% 0;">宅配チェック</span>
<span id="t60" class="t serif" style="left:252px;top:598px;font-size:18px;line-height:18.67px;transform:translateX(-50%) scaleX(0.9980);transform-origin:50% 0;">リスト印刷</span>
<div class="btn" style="left:323px;top:550px;width:118px;height:94px;"></div>
<span id="t61" class="t serif" style="left:382px;top:579px;font-size:18px;line-height:18.67px;transform:translateX(-50%) scaleX(0.9878);transform-origin:50% 0;">郵便チェック</span>
<span id="t62" class="t serif" style="left:377px;top:598px;font-size:18px;line-height:18.67px;transform:translateX(-50%) scaleX(0.9980);transform-origin:50% 0;">リスト印刷</span>
<div class="" style="left:511px;top:179px;width:190px;height:69px;border:1px solid #b4b09c;box-shadow:1px 1px 0 #fff, inset 1px 1px 0 #fff"></div>
<div class="" style="left:518px;top:172px;width:73px;height:14px;background:#ece9d8"></div>
<span id="t63" class="t " style="left:517.28px;top:172px;font-size:13.5px;line-height:15px;transform:scaleX(1.0704);">レター印刷</span>
<svg style="left:523px;top:195px" width="12" height="12" viewBox="0 0 12 12"><circle cx="6" cy="6" r="5.500" fill="#fff"/><path d="M1.800 10.200A5.600 5.600 0 0 1 10.200 1.800" fill="none" stroke="#808080" stroke-width="1"/><path d="M2.800 9.200A4.300 4.300 0 0 1 9.200 2.800" fill="none" stroke="#404040" stroke-width="1"/><path d="M10.200 1.800A5.600 5.600 0 0 1 1.800 10.200" fill="none" stroke="#fff" stroke-width="1"/><path d="M9.200 2.800A4.300 4.300 0 0 1 2.800 9.200" fill="none" stroke="#d4d0c8" stroke-width="1"/><circle cx="6" cy="6" r="2" fill="#000"/></svg>
<svg style="left:523px;top:217.5px" width="12" height="12" viewBox="0 0 12 12"><circle cx="6" cy="6" r="5.500" fill="#fff"/><path d="M1.800 10.200A5.600 5.600 0 0 1 10.200 1.800" fill="none" stroke="#808080" stroke-width="1"/><path d="M2.800 9.200A4.300 4.300 0 0 1 9.200 2.800" fill="none" stroke="#404040" stroke-width="1"/><path d="M10.200 1.800A5.600 5.600 0 0 1 1.800 10.200" fill="none" stroke="#fff" stroke-width="1"/><path d="M9.200 2.800A4.300 4.300 0 0 1 2.800 9.200" fill="none" stroke="#d4d0c8" stroke-width="1"/></svg>
<span id="t64" class="t " style="left:538.83px;top:196px;font-size:14.67px;line-height:15px;transform:scaleX(1.0867);">すべて</span>
<span id="t65" class="t " style="left:539.85px;top:218px;font-size:14.67px;line-height:15px;transform:scaleX(1.0633);">商品別</span>
<div class="" style="left:595px;top:214px;width:99px;height:19px;border:1px solid #000;"></div>
<div class="cbtn" style="left:676px;top:216px;width:17px;height:16px;border-right-color:#000;border-bottom-color:#000"><i class="arrow" style="left:4px;top:6px;border-top-color:#aca899"></i></div>
<div class="btn" style="left:757px;top:169px;width:119px;height:60px;"></div>
<span id="t66" class="t serif" style="left:813.25px;top:192px;font-size:18px;line-height:18.67px;transform:translateX(-50%) scaleX(0.9229);transform-origin:50% 0;">バックアップ</span>
<div class="btn" style="left:512px;top:255px;width:118px;height:98px;"></div>
<span id="t67" class="t serif" style="left:568px;top:295px;font-size:20.5px;line-height:21.33px;transform:translateX(-50%) scaleX(1.0449);transform-origin:50% 0;">レター印刷</span>
<div class="btn" style="left:636px;top:255px;width:118px;height:98px;"></div>
<span id="t68" class="t serif" style="left:693.5px;top:284px;font-size:20.5px;line-height:21.33px;transform:translateX(-50%) scaleX(1.0620);transform-origin:50% 0;">再発送印</span>
<span id="t69" class="t serif" style="left:693px;top:305px;font-size:20.5px;line-height:21.33px;transform:translateX(-50%) scaleX(1.0734);transform-origin:50% 0;">刷処理</span>
<div class="btn" style="left:761px;top:255px;width:118px;height:98px;"></div>
<span id="t70" class="t serif" style="left:817.5px;top:284px;font-size:20.5px;line-height:21.33px;transform:translateX(-50%) scaleX(1.0616);transform-origin:50% 0;">発送確定</span>
<span id="t71" class="t serif" style="left:818px;top:305px;font-size:20.5px;line-height:21.33px;transform:translateX(-50%) scaleX(1.0750);transform-origin:50% 0;">処理</span>
<span id="t72" class="t " style="left:516.96px;top:371px;font-size:12px;line-height:12px;color:#0000c0;transform:scaleX(0.9046);">Eoaから始まるファイ</span>
<span id="t73" class="t " style="left:516.98px;top:383px;font-size:12px;line-height:12px;color:#0000c0;transform:scaleX(0.8806);">ルを選択してください</span>
<span id="t74" class="t " style="left:634.44px;top:371px;font-size:12px;line-height:12px;color:#0000c0;transform:scaleX(0.9087);">Eodから始まるファイ</span>
<span id="t75" class="t " style="left:634.48px;top:383px;font-size:12px;line-height:12px;color:#0000c0;transform:scaleX(0.8764);">ルを選択してください</span>
<span id="t76" class="t " style="left:761.97px;top:356px;font-size:12px;line-height:12px;color:#dd1111;transform:scaleX(1.0074);">未着の問合せ</span>
<span id="t77" class="t " style="left:761.98px;top:371px;font-size:12px;line-height:12px;color:#dd1111;transform:scaleX(0.9645);">未着データ作成</span>
<span id="t78" class="t " style="left:761.95px;top:386px;font-size:12px;line-height:12px;color:#dd1111;transform:scaleX(1.0021);">返品処理作業<span class="cj">↓</span></span>
<div class="btn" style="left:512px;top:399px;width:118px;height:98px;"></div>
<span id="t79" class="t serif dis" style="left:568.75px;top:419px;font-size:20.5px;line-height:21.33px;transform:translateX(-50%) scaleX(1.0926);transform-origin:50% 0;">飛伝発送</span>
<span id="t80" class="t serif dis" style="left:571.5px;top:440px;font-size:20.5px;line-height:21.33px;transform:translateX(-50%) scaleX(1.0552);transform-origin:50% 0;">実績データ</span>
<span id="t81" class="t serif dis" style="left:570px;top:461px;font-size:20.5px;line-height:21.33px;transform:translateX(-50%) scaleX(1.0639);transform-origin:50% 0;">取込</span>
<div class="btn" style="left:636px;top:399px;width:118px;height:98px;"></div>
<span id="t82" class="t serif dis" style="left:693.75px;top:419px;font-size:20.5px;line-height:21.33px;transform:translateX(-50%) scaleX(1.0926);transform-origin:50% 0;">飛伝発送</span>
<span id="t83" class="t serif dis" style="left:696.5px;top:440px;font-size:20.5px;line-height:21.33px;transform:translateX(-50%) scaleX(1.0552);transform-origin:50% 0;">荷物データ</span>
<span id="t84" class="t serif dis" style="left:695px;top:461px;font-size:20.5px;line-height:21.33px;transform:translateX(-50%) scaleX(1.0639);transform-origin:50% 0;">取込</span>
<div class="btn" style="left:761px;top:399px;width:118px;height:98px;"></div>
<span id="t85" class="t serif" style="left:818.5px;top:418px;font-size:20.5px;line-height:21.33px;transform:translateX(-50%) scaleX(1.0611);transform-origin:50% 0;">返品処理</span>
<span id="t86" class="t serif" style="left:819px;top:439px;font-size:20.5px;line-height:21.33px;transform:translateX(-50%) scaleX(1.0738);transform-origin:50% 0;">未着問合</span>
<span id="t87" class="t serif" style="left:819.25px;top:460px;font-size:20.5px;line-height:21.33px;transform:translateX(-50%) scaleX(0.9914);transform-origin:50% 0;">せフォーム</span>
<span id="t88" class="t " style="left:513.21px;top:503px;font-size:12px;line-height:12px;color:#0000c0;transform:scaleX(0.9236);">発送実績・荷物履歴両方を取り込んでください。</span>
<div class="combo" style="left:514px;top:528px;width:38px;height:16px;"></div>
<div class="cbtn" style="left:534px;top:530px;width:17px;height:13px;"><i class="arrow" style="left:4px;top:4px"></i></div>
<span id="t89" class="t " style="left:554.71px;top:529px;font-size:12px;line-height:12px;transform:scaleX(1.0194);">月</span>
<div class="combo" style="left:572px;top:528px;width:38px;height:16px;"></div>
<div class="cbtn" style="left:592px;top:530px;width:17px;height:13px;"><i class="arrow" style="left:4px;top:4px"></i></div>
<span id="t90" class="t " style="left:610.78px;top:529px;font-size:12px;line-height:12px;transform:scaleX(1.1189);">回</span>
<span id="t91" class="t " style="left:636.95px;top:525px;font-size:12px;line-height:12px;color:#dd1111;transform:scaleX(0.9315);"><span class="cj">←</span>いつ発送の分か指定してください。</span>
<div class="btn" style="left:512px;top:546px;width:118px;height:92px;"></div>
<span id="t92" class="t serif" style="left:569.25px;top:562px;font-size:20.5px;line-height:21.33px;transform:translateX(-50%) scaleX(1.0803);transform-origin:50% 0;">佐川急便</span>
<span id="t93" class="t serif" style="left:569.25px;top:583px;font-size:20.5px;line-height:21.33px;transform:translateX(-50%) scaleX(1.0804);transform-origin:50% 0;">発送状況</span>
<span id="t94" class="t serif" style="left:569.5px;top:603px;font-size:20.5px;line-height:21.33px;transform:translateX(-50%) scaleX(1.1430);transform-origin:50% 0;">印刷</span>
<div class="btn" style="left:636px;top:543px;width:118px;height:98px;"></div>
<span id="t95" class="t serif dis" style="left:692.5px;top:572px;font-size:20.5px;line-height:21.33px;transform:translateX(-50%) scaleX(1.0864);transform-origin:50% 0;">発送実績</span>
<span id="t96" class="t serif dis" style="left:693.75px;top:593px;font-size:20.5px;line-height:21.33px;transform:translateX(-50%) scaleX(1.0614);transform-origin:50% 0;">データ出力</span>
<div class="btn" style="left:761px;top:543px;width:118px;height:98px;"></div>
<span id="t97" class="t serif dis" style="left:817.5px;top:572px;font-size:20.5px;line-height:21.33px;transform:translateX(-50%) scaleX(1.0616);transform-origin:50% 0;">発送状況</span>
<span id="t98" class="t serif dis" style="left:819px;top:593px;font-size:20.5px;line-height:21.33px;transform:translateX(-50%) scaleX(1.0745);transform-origin:50% 0;">集計印刷</span>
<span id="t99" class="t " style="left:510.83px;top:645px;font-size:12px;line-height:12px;color:#dd1111;transform:scaleX(0.9727);"><span class="cj">↑</span>ここには郵便未発送データが反映されていません。</span>

<div id="status"></div>
<span id="t100" class="t " style="left:7.92px;top:975px;font-size:12px;line-height:14px;transform:scaleX(0.9440);">フォーム ビュー</span>
<span id="t101" class="t " style="left:1176.91px;top:975px;font-size:11px;line-height:14px;transform:scaleX(1.0447);">NUM</span>
<div class="" style="left:993px;top:973px;width:1px;height:17px;background:#e6e3d3"></div>
<div class="" style="left:1028px;top:973px;width:1px;height:17px;background:#e6e3d3"></div>
<div class="" style="left:1063px;top:973px;width:1px;height:17px;background:#e6e3d3"></div>
<div class="" style="left:1098px;top:973px;width:1px;height:17px;background:#e6e3d3"></div>
<div class="" style="left:1133px;top:973px;width:1px;height:17px;background:#e6e3d3"></div>
<div class="" style="left:1168px;top:973px;width:1px;height:17px;background:#e6e3d3"></div>
<div class="" style="left:1211px;top:973px;width:1px;height:17px;background:#e6e3d3"></div>
<div class="" style="left:1246px;top:973px;width:1px;height:17px;background:#e6e3d3"></div>
<div class="" style="left:1278px;top:102px;width:2px;height:866px;background:#fff"></div>
<div class="" style="left:0px;top:102px;width:1278px;height:1px;background:#6b6a66"></div>
<div class="" style="left:0px;top:102px;width:1px;height:866px;background:#b4b2a6"></div>
<div class="" style="left:1px;top:102px;width:1px;height:866px;background:#6b6a66"></div>

<div id="taskbar"></div>
<div class="startbtn" style="left:0px;top:994px;width:108px;height:28px;"></div>
<svg style="left:9px;top:998px" width="22" height="21" viewBox="0 0 18 18"><path d="M2 3.500c2.500-1.500 4.500-1 6.500.3L7.300 9C5.300 7.700 3.300 7.300.8 8.800z" fill="#e8502c"/><path d="M9.800 4.300c2 1.200 4 1.700 6.700.2L15.300 9.800c-2.600 1.400-4.700 1-6.700-.2z" fill="#7cc242"/><path d="M.5 10.200c2.500-1.500 4.500-1 6.500.3l-1.200 5.200c-2-1.300-4-1.700-6.500-.2z" fill="#3a86e8"/><path d="M8.300 11c2 1.200 4 1.700 6.700.2l-1.200 5.300c-2.600 1.400-4.700 1-6.700-.2z" fill="#f8c020"/></svg>
<span id="t102" class="t " style="left:34.92px;top:1000px;font-size:15px;line-height:15px;transform:scaleX(0.9188);font-weight:bold;font-style:italic;color:#fff;line-height:18px;text-shadow:1px 1px 1px #1c4a14">スタート</span>
<div class="" style="left:119px;top:1000px;width:4px;height:20px;background:radial-gradient(circle at 1px 1px,#0f3a9a 1px,transparent 1.2px);background-size:4px 4px;opacity:.9"></div>
<div class="" style="left:253px;top:1000px;width:4px;height:20px;background:radial-gradient(circle at 1px 1px,#0f3a9a 1px,transparent 1.2px);background-size:4px 4px;opacity:.9"></div>
<div class="" style="left:951px;top:1000px;width:4px;height:20px;background:radial-gradient(circle at 1px 1px,#0f3a9a 1px,transparent 1.2px);background-size:4px 4px;opacity:.9"></div>
<svg style="left:131px;top:1001px" width="17" height="17" viewBox="0 0 17 17"><rect x="1" y="1" width="13" height="14" rx="2.500" fill="#e8f0ff" stroke="#234" stroke-width="1.200"/><text x="3.500" y="12" font-size="10" font-weight="bold" font-family="Liberation Sans,sans-serif" fill="#2050c0">e</text><path d="M10 5l5-3-1 5z" fill="#e04030"/></svg>
<svg style="left:154px;top:1000px" width="18" height="18" viewBox="0 0 18 18"><text x="1.500" y="15" font-size="19" font-weight="bold" font-style="italic" font-family="Liberation Sans,sans-serif" fill="#3f9cf4" stroke="#2a78d8" stroke-width=".5">e</text><path d="M1 12C3 4 12 0 17 3" fill="none" stroke="#8cc8ff" stroke-width="1.600"/></svg>
<svg style="left:179px;top:1001px" width="14" height="17" viewBox="0 0 14 17"><rect x="1" y="1.500" width="12" height="15" fill="#fff" stroke="#333"/><path d="M2 1.500v-1M4 1.500v-1M6 1.500v-1M8 1.500v-1M10 1.500v-1M12 1.500v-1" stroke="#333"/><path d="M3 6h6" stroke="#e040a0" stroke-width="2"/><path d="M5 10h6" stroke="#30c0c0" stroke-width="2"/><path d="M3 13h5" stroke="#e8a030" stroke-width="1.500"/></svg>
<svg style="left:201px;top:1001px" width="17" height="17" viewBox="0 0 17 17"><rect x="2" y="1" width="13" height="10" fill="#222"/><rect x="3.500" y="2.500" width="10" height="7" fill="#f0e040"/><text x="6" y="9" font-size="7" font-weight="bold" font-family="Liberation Serif,serif" fill="#222">T</text><rect x="0.500" y="12" width="16" height="4" fill="#e8e8e0" stroke="#222"/></svg>
<div class="task" style="left:264px;top:998px;width:157px;height:23px;"></div>
<svg style="left:273px;top:1002px" width="17" height="14" viewBox="0 0 17 14"><rect x="4.500" y="0.500" width="12" height="9" fill="#fff" stroke="#112" stroke-width="1.300"/><rect x="0.700" y="3.700" width="12" height="9.600" fill="#fff" stroke="#112" stroke-width="1.400"/><path d="M1 7h11M1 10h11M5 7v6" stroke="#112" stroke-width="1.100"/></svg>
<span id="t103" class="t " style="left:290.95px;top:1003px;font-size:12px;line-height:14px;color:#fff;transform:scaleX(0.8046);">じゃらん : データベース (...</span>
<div class="task active" style="left:423px;top:998px;width:160px;height:23px;"></div>
<svg style="left:435px;top:1005px" width="13" height="11" viewBox="0 0 13 11"><rect x="0.500" y="0.500" width="12" height="10" fill="#fff" stroke="#000"/><path d="M1 2.500h11" stroke="#000"/><rect x="2.500" y="4.500" width="3" height="1" fill="#fff" stroke="#000" stroke-width=".9"/><rect x="7.500" y="4.500" width="3" height="1" fill="#fff" stroke="#000" stroke-width=".9"/><rect x="2.500" y="7.500" width="3" height="1" fill="#fff" stroke="#000" stroke-width=".9"/><rect x="7.500" y="7.500" width="3" height="1" fill="#fff" stroke="#000" stroke-width=".9"/></svg>
<span id="t104" class="t " style="left:454px;top:1003px;font-size:12px;line-height:14px;color:#fff;transform:scaleX(0.7650);">frm_メインメニュー : フォ...</span>
<svg style="left:965px;top:1001px" width="16" height="15" viewBox="0 0 16 15"><path d="M2 3c3-3 8-3 12 0" fill="none" stroke="#fff" stroke-width="1"/><rect x="0.500" y="4.500" width="15" height="9" rx="1" fill="#fff" stroke="#222"/><path d="M2 7h12M2 9h12M3 11.500h10" stroke="#222" stroke-width="1.200" stroke-dasharray="1.500 1"/></svg>
<svg style="left:983px;top:1001px" width="18" height="17" viewBox="0 0 18 17"><circle cx="7" cy="7" r="6" fill="#e02020"/><circle cx="5" cy="5" r="2" fill="#ff8070"/><path d="M14 1l-3 13" stroke="#f0f0f0" stroke-width="2"/><circle cx="11" cy="13" r="3" fill="#444"/></svg>
<span id="t105" class="t " style="left:1013.1px;top:1001px;font-size:16px;line-height:17px;color:#fff;transform:scaleX(0.8433);">A</span>
<span id="t106" class="t " style="left:1023.25px;top:1001px;font-size:16px;line-height:17px;color:#fff;transform:scaleX(1.0656);">般</span>
<svg style="left:1043px;top:1001px" width="18" height="17" viewBox="0 0 18 17"><rect x="1" y="6" width="12" height="10" rx="2" fill="#f0e8c0" stroke="#554"/><circle cx="12" cy="5" r="4.500" fill="#b0d8f0" stroke="#556"/><path d="M3 5l3 3M7 2v6" stroke="#e03030" stroke-width="1.500"/><path d="M4 2l2 6" stroke="#30a030" stroke-width="1.500"/></svg>
<svg style="left:1064px;top:1001px" width="18" height="15" viewBox="0 0 18 15"><path d="M1 7l8-5 8 3-8 5z" fill="#f0b0b0" stroke="#654"/><path d="M1 7v5l8 3V10zM9 10v5l8-5V5z" fill="#e8c8a0" stroke="#654"/></svg>
<svg style="left:1087px;top:1001px" width="17" height="17" viewBox="0 0 17 17"><path d="M2 13L13 2l2 1L5 14z" fill="#222"/><path d="M1 15h8v-3H5z" fill="#fff"/><rect x="9" y="11" width="7" height="4" fill="#2040c0"/></svg>
<div class="tray" style="left:1117px;top:990px;width:163px;height:34px;"></div>
<svg style="left:1108px;top:1001px" width="19" height="19" viewBox="0 0 19 19"><circle cx="9.500" cy="9.500" r="9" fill="#3a8cf0" stroke="#a8d0ff" stroke-width="1"/><path d="M11.500 5.500l-4 4 4 4" fill="none" stroke="#fff" stroke-width="2.200"/></svg>
<svg style="left:1129px;top:1001px" width="16" height="16" viewBox="0 0 16 16"><circle cx="8" cy="8" r="7" fill="#6a90c8" stroke="#3868b0" stroke-width="1.500"/><circle cx="8" cy="8" r="3" fill="#a8c0e8"/></svg>
<svg style="left:1148px;top:1001px" width="14" height="16" viewBox="0 0 14 16"><rect x="2" y="0" width="11" height="8" fill="#f0e060"/><rect x="0" y="8" width="14" height="7" fill="#d0d0e0"/><path d="M1 11h4l1-2 2 4 1-2h4" stroke="#e02020" fill="none"/></svg>
<svg style="left:1165px;top:1001px" width="16" height="16" viewBox="0 0 16 16"><circle cx="8" cy="8" r="7.500" fill="#f0c020" stroke="#a07010"/><path d="M5 11c0-6 6-6 6 0z" fill="#fff4c0" stroke="#604000" stroke-width=".8"/></svg>
<svg style="left:1183px;top:1001px" width="16" height="16" viewBox="0 0 16 16"><circle cx="8" cy="8" r="7.500" fill="#38a838"/><path d="M8 .5a7.500 7.500 0 0 1 7.500 7.500H8z" fill="#e03030"/><circle cx="8" cy="8" r="3.500" fill="#f0f0f0"/></svg>
<svg style="left:1200px;top:1001px" width="16" height="16" viewBox="0 0 16 16"><rect width="16" height="16" fill="#d88020"/><path d="M0 0h8v16H0z" fill="#3070c0"/><path d="M4 3h9v2.500H7v2h5v2.500H7v2h6V14H4z" fill="#fff"/></svg>
<svg style="left:1219px;top:1001px" width="15" height="16" viewBox="0 0 15 16"><path d="M1 1l13 7-13 7z" fill="#b0b0a8" stroke="#605840" stroke-width="1.200"/></svg>
<span id="t107" class="t " style="left:1239.74px;top:1002px;font-size:12px;line-height:14px;color:#fff;transform:scaleX(0.9004);">18:04</span>

</div>
</body>
</html>
